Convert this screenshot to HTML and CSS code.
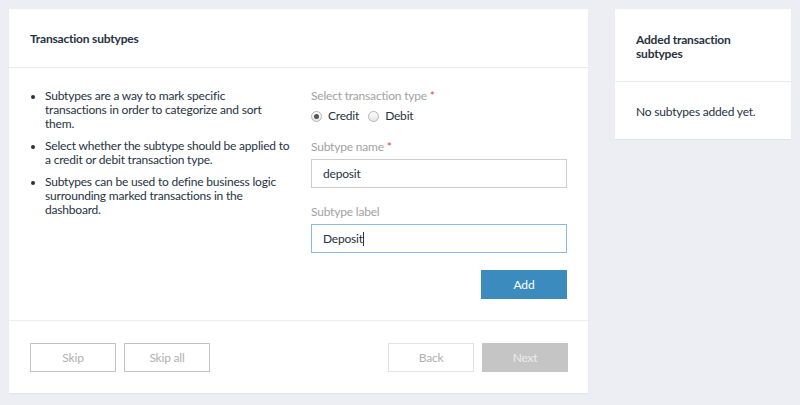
FILE: index.html
```html
<!doctype html>
<html lang="en">
<head>
	<meta charset="UTF-8">
	<title>Transaction subtypes</title>
	<link rel="stylesheet" href="styles.css">
</head>
<body>
	<div class="page">
		<div class="card main">
			<div class="card-head">Transaction subtypes</div>
			<div class="card-body">
				<ul class="hints">
					<li class="short">Subtypes are a way to mark specific transactions in order to categorize and sort them.</li>
					<li>Select whether the subtype should be applied to a credit or debit transaction type.</li>
					<li>Subtypes can be used to define business logic surrounding marked transactions in the dashboard.</li>
				</ul>
				<form class="form">
					<div class="field">
						<label class="label">Select transaction type <span class="req">*</span></label>
						<div class="radios">
							<label class="radio"><span class="dot on"></span>Credit</label>
							<label class="radio"><span class="dot"></span>Debit</label>
						</div>
					</div>
					<div class="field">
						<label class="label">Subtype name <span class="req">*</span></label>
						<input type="text" class="input" value="deposit">
					</div>
					<div class="field">
						<label class="label">Subtype label</label>
						<div class="input focus">Deposit<span class="caret"></span></div>
					</div>
					<div class="form-actions">
						<button type="button" class="btn primary">Add</button>
					</div>
				</form>
			</div>
			<div class="card-foot">
				<div class="group">
					<button type="button" class="btn outline">Skip</button>
					<button type="button" class="btn outline">Skip all</button>
				</div>
				<div class="group">
					<button type="button" class="btn light">Back</button>
					<button type="button" class="btn disabled">Next</button>
				</div>
			</div>
		</div>
		<div class="card side">
			<div class="card-head">Added transaction subtypes</div>
			<div class="card-body">No subtypes added yet.</div>
		</div>
	</div>
</body>
</html>
```
FILE: styles.css
```css
*{
	box-sizing:border-box;
}
body{
	margin:0;
	background:#eceef3;
	font:12px/14px "Lato","Open Sans",sans-serif;
	letter-spacing:-0.2px;
	color:#26323f;
}
.page{
	display:flex;
	align-items:flex-start;
	gap:27px;
	padding:9px;
}
.card{
	background:#fff;
	box-shadow:0 1px 1px rgba(0,0,0,.04);
}
.main{
	width:579px;
}
.side{
	width:176px;
}
.card-head{
	font-weight:700;
	padding:23px 21px 20px;
	border-bottom:1px solid #e8eaee;
	height:59px;
}
.side .card-head{
	height:73px;
	padding:24px 21px 20px;
}
.side .card-body{
	padding:23px 21px 21px;
	height:57px;
}
.main .card-body{
	display:flex;
	justify-content:space-between;
	padding:21px 21px 20px 21px;
	border-bottom:1px solid #eceef2;
	height:253px;
}
.hints{
	margin:0;
	padding:0 0 0 15px;
	width:262px;
}
.hints li{
	margin-bottom:8px;
}
.hints li.short{
	padding-right:20px;
}
.hints li::marker{
	font-size:11px;
}
.form{
	width:256px;
	margin:0;
}
.field{
	margin-bottom:17px;
}
.label{
	display:block;
	color:#a2a2a2;
	margin-bottom:5px;
}
.req{
	color:#e0464b;
}
.radios{
	display:flex;
	gap:9px;
	padding-top:1px;
}
.radio{
	display:flex;
	align-items:center;
	gap:6px;
}
.dot{
	width:11px;
	height:11px;
	border-radius:50%;
	border:1px solid #b5b5b5;
	background:linear-gradient(#fdfdfd,#e6e6e6);
	position:relative;
}
.dot.on::after{
	content:"";
	position:absolute;
	left:2px;
	top:2px;
	width:5px;
	height:5px;
	border-radius:50%;
	background:#555;
}
.input{
	display:block;
	width:100%;
	height:29px;
	border:1px solid #cdcdcd;
	padding:0 11px;
	font:inherit;
	letter-spacing:inherit;
	line-height:27px;
	color:#26323f;
	outline:none;
}
.input.focus{
	border-color:#8cbbd8;
}
.caret{
	display:inline-block;
	width:1px;
	height:14px;
	background:#333;
	vertical-align:-3px;
}
.form-actions{
	display:flex;
	justify-content:flex-end;
}
.btn{
	width:86px;
	height:29px;
	font:inherit;
	letter-spacing:inherit;
	border:1px solid transparent;
	background:#fff;
	cursor:pointer;
}
.btn.primary{
	background:#3b8bbf;
	border-color:#3b8bbf;
	color:#fff;
}
.btn.outline{
	border-color:#c2c2c2;
	color:#b0b0b0;
}
.btn.light{
	border-color:#e2e2e2;
	color:#b0b0b0;
}
.btn.disabled{
	background:#c5c5c5;
	border-color:#c5c5c5;
	color:#ececec;
}
.card-foot{
	display:flex;
	justify-content:space-between;
	padding:22px 20px 21px 21px;
}
.group{
	display:flex;
	gap:8px;
}
```
